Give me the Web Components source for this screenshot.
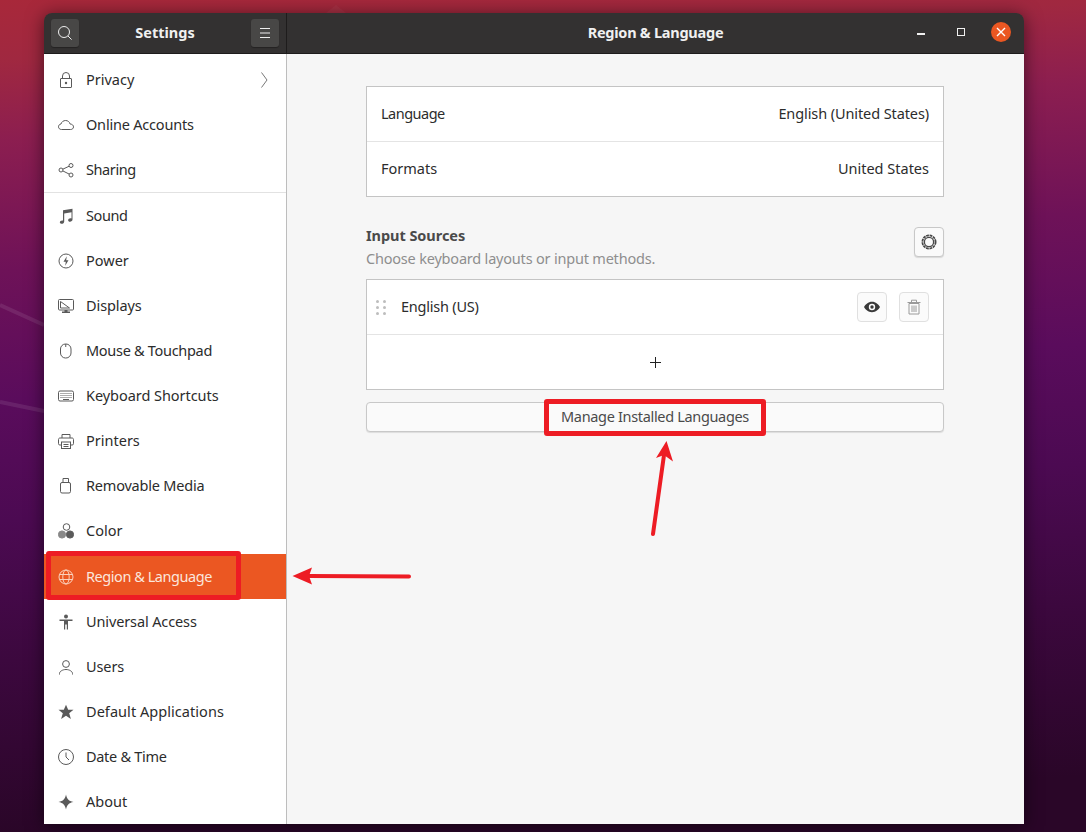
<!DOCTYPE html>
<html>
<head>
<meta charset="utf-8">
<title>Region & Language</title>
<style>
  body { margin: 0; font-family: "Noto Sans", "Liberation Sans", sans-serif; }
</style>
</head>
<body>
<desk-top>
  <settings-window>
    <span slot="left-title">Settings</span>
    <span slot="title" style="letter-spacing:-.25px">Region &amp; Language</span>

    <side-row slot="sidebar" icon="lock" chevron>Privacy</side-row>
    <side-row slot="sidebar" icon="cloud" style="letter-spacing:-.2px">Online Accounts</side-row>
    <side-row slot="sidebar" icon="share" style="letter-spacing:-.4px">Sharing</side-row>
    <side-sep slot="sidebar"></side-sep>
    <side-row slot="sidebar" icon="music" style="letter-spacing:-.4px">Sound</side-row>
    <side-row slot="sidebar" icon="power">Power</side-row>
    <side-row slot="sidebar" icon="display" style="letter-spacing:-.1px">Displays</side-row>
    <side-row slot="sidebar" icon="mouse" style="letter-spacing:-.3px">Mouse &amp; Touchpad</side-row>
    <side-row slot="sidebar" icon="keyboard" style="letter-spacing:-.05px">Keyboard Shortcuts</side-row>
    <side-row slot="sidebar" icon="printer">Printers</side-row>
    <side-row slot="sidebar" icon="usb" style="letter-spacing:-.2px">Removable Media</side-row>
    <side-row slot="sidebar" icon="color">Color</side-row>
    <side-row slot="sidebar" icon="globe" selected style="letter-spacing:-.45px">Region &amp; Language</side-row>
    <side-row slot="sidebar" icon="access" style="letter-spacing:-.12px">Universal Access</side-row>
    <side-row slot="sidebar" icon="user" style="letter-spacing:-.1px">Users</side-row>
    <side-row slot="sidebar" icon="star" style="letter-spacing:.05px">Default Applications</side-row>
    <side-row slot="sidebar" icon="clock" style="letter-spacing:-.3px">Date &amp; Time</side-row>
    <side-row slot="sidebar" icon="about">About</side-row>

    <region-panel></region-panel>
  </settings-window>

  <red-box style="left:46px;top:551px;width:195px;height:49px"></red-box>
  <red-box style="left:544px;top:399px;width:222px;height:37px"></red-box>
  <red-arrow tail="409,576.5" neck="309,576" head="292.5,576 312,567.5 309,576 312,584.5"></red-arrow>
  <red-arrow tail="653,534" neck="664,455" head="666.5,441 656,458 664,455 673,461.5"></red-arrow>
</desk-top>

<script>
const ICONS = {
  search: '<circle cx="7" cy="7" r="5.5"/><path d="M11 11l3.6 3.6"/>',
  menu: '<path d="M3 3.5h10M3 8h10M3 12.5h10"/>',
  lock: '<rect x="2.5" y="6.5" width="11" height="9" rx=".5"/><path d="M4.5 6.5V4a3.5 3.5 0 0 1 7 0v2.5"/><circle cx="8" cy="11" r="1.2" fill="currentColor" stroke="none"/>',
  cloud: '<path d="M3.5 12.5C1.6 12.5.5 11.2.5 9.8c0-1.5 1-2.6 2.5-2.8C3.5 4.900 5.500 3.500 7.600 3.500c2.300 0 4 1.500 4.500 3.500 2 .1 3.400 1.300 3.400 2.900 0 1.500-1.200 2.600-2.900 2.600z"/>',
  share: '<circle cx="3" cy="8" r="2"/><circle cx="13" cy="3.500" r="2"/><circle cx="13" cy="13" r="2"/><path d="M4.800 7.200l6.400-3M4.800 8.900l6.400 3.200"/>',
  music: '<path fill="currentColor" stroke="none" d="M5 2.200L14.500 .8v10.700c0 1.300-1.200 2.200-2.500 2.200-1.100 0-1.900-.6-1.900-1.500 0-1.100 1.100-1.900 2.400-1.900.4 0 .7 0 1 .2V4.300L6.200 5.400v8.300c0 1.200-1.200 2.100-2.500 2.100-1.100 0-1.900-.6-1.900-1.500 0-1.100 1.100-1.900 2.400-1.900.3 0 .6 0 .8.100z"/>',
  power: '<circle cx="8" cy="8" r="7"/><path fill="currentColor" stroke="none" d="M8.800 3.200L5.500 8.700h2.300l-.6 4.100 3.300-5.500H8.200z"/>',
  display: '<rect x=".5" y="1.500" width="15" height="10.500" rx="1"/><path d="M2.500 3.500l9 6.500h-9z"/><path fill="currentColor" stroke="none" d="M6.500 12h3v1.500h2.500V15H4v-1.500h2.500z"/>',
  mouse: '<rect x="2.500" y="1" width="10.500" height="14" rx="5"/><path d="M7.750 1v3"/>',
  keyboard: '<rect x=".5" y="3" width="15" height="10" rx="1.500"/><path stroke-dasharray="1 1" d="M2.500 5.500h11M2.500 7.500h11M2.500 9.500h11"/><path d="M5 11.500h6"/>',
  printer: '<path d="M4 5V1.500h8V5"/><path d="M3.500 12H1.800C1 12 .5 11.500 .5 10.700V6.500C.5 5.700 1 5 2 5h12c1 0 1.500.7 1.500 1.500v4.200c0 .8-.5 1.300-1.300 1.300h-1.700"/><rect x="3.500" y="9" width="9" height="6.500"/><path d="M5.500 11.500h5M5.500 13.500h5"/>',
  usb: '<rect x="2.500" y="4.500" width="10" height="10.500" rx="1.500"/><path d="M5 4.500V.5h5.500v4M7 2.500h.1M8.900 2.500h.1"/>',
  color: '<circle cx="8.500" cy="4" r="3.300"/><circle cx="4" cy="11.500" r="3.600" fill="#888" stroke="#888"/><circle cx="12" cy="11.500" r="3.600" fill="currentColor"/>',
  globe: '<circle cx="8" cy="8" r="7"/><ellipse cx="8" cy="8" rx="3.200" ry="7"/><path d="M1.300 5.500h13.400M1.300 10.500h13.400"/>',
  access: '<circle cx="8" cy="2.500" r="2" fill="currentColor" stroke="none"/><path fill="currentColor" stroke="none" d="M1.500 5.500h13v1.500H10v8.500H8.800v-5H7.200v5H6V7H1.500z"/>',
  user: '<circle cx="8" cy="5" r="3.400"/><path d="M1.500 15.500v-1c0-2 3-4 6.500-4s6.500 2 6.500 4v1"/>',
  star: '<path fill="currentColor" stroke="none" d="M8 .8l2.200 5h5.300l-4.300 3.500 1.700 5.600L8 11.700l-4.900 3.200 1.700-5.600L.5 5.800h5.300z"/>',
  clock: '<circle cx="8" cy="8" r="7.500"/><path d="M8 3.500V8l3 3"/>',
  about: '<path fill="currentColor" stroke="none" d="M8 .5c.8 4.300 2.700 6.700 7.500 7.500-4.800.8-6.700 3.200-7.500 7.500C7.200 11.200 5.300 8.800.5 8 5.300 7.200 7.200 4.800 8 .5z"/>',
  chevron: '<path d="M1.500 .5L7 8l-5.500 7.500"/>',
  gear: '<circle cx="8" cy="8" r="4.600" stroke-width="1.300"/><circle cx="8" cy="8" r="6.600" stroke-width="1.800" stroke-dasharray="2.800 .7"/>',
  eye: '<path fill="currentColor" fill-rule="evenodd" stroke="none" d="M8 2.800c3.800 0 6.500 2.600 8 5.200-1.500 2.600-4.200 5.200-8 5.200S1.500 10.600 0 8c1.500-2.600 4.200-5.200 8-5.200zM8 4.800a3.200 3.200 0 1 0 0 6.400 3.200 3.200 0 0 0 0-6.400z"/><circle cx="8" cy="8" r="1.700" fill="currentColor" stroke="none"/>',
  trash: '<path d="M3 4.500h10v10.500H3zM1.500 3.500h13M5.500 3V1.200h5V3M6 6.500v6.500M8 6.500v6.500M10 6.500v6.500"/>',
  plus: '<path d="M8.500 3v11M3 8.500h11"/>'
}

function svgIcon(name, size = 16) {
  return `<svg width="${size}" height="${size}" viewBox="0 0 16 16" fill="none" stroke="currentColor" stroke-width="1">${ICONS[name]}</svg>`
}

class DeskTop extends HTMLElement {
  constructor() {
    super()
    this.attachShadow({ mode: 'open' })
    this.shadowRoot.innerHTML = `
      <style>
        :host {
          display: block;
          position: relative;
          width: 1086px;
          height: 832px;
          box-sizing: border-box;
          padding: 13px 62px 8px 44px;
          overflow: hidden;
          background: linear-gradient(177deg, #a8283a 0, #a02840 60px, #8c1e50 140px, #6e1258 270px, #5a0c5c 400px, #4c0a52 520px, #3c083e 660px, #2a0628 832px);
        }
        svg { position: absolute; left: 0; top: 0; }
        ::slotted(settings-window) { position: relative; }
      </style>
      <svg width="1086" height="832">
        <path d="M0 305L44 325M0 402L44 411" stroke="#fff" stroke-opacity=".09" stroke-width="4" fill="none"/>
        <path d="M326 13L336 5L346 13z" fill="#fff" fill-opacity=".04"/>
      </svg>
      <slot></slot>
    `
  }
}

class SettingsWindow extends HTMLElement {
  constructor() {
    super()
    this.attachShadow({ mode: 'open' })
    this.shadowRoot.innerHTML = `
      <style>
        :host {
          display: grid;
          grid-template-columns: 243px 1fr;
          grid-template-rows: 41px 1fr;
          width: 980px;
          height: 811px;
          border-radius: 8px 8px 0 0;
          overflow: hidden;
          box-shadow: 0 2px 18px rgba(0, 0, 0, .55);
        }
        .bar {
          display: flex;
          align-items: center;
          background: #333131;
          border-bottom: 1px solid #1e1c1c;
          color: #f0f0f0;
          font-weight: 700;
          font-size: 14.5px;
          box-sizing: border-box;
        }
        ::slotted(span) { padding-bottom: 2px; }
        .left {
          border-right: 1px solid #1e1c1c;
          padding: 0 7px;
          justify-content: space-between;
        }
        .right { position: relative; justify-content: center; }
        .head-btn {
          width: 28px;
          height: 28px;
          margin-bottom: 1px;
          display: flex;
          align-items: center;
          justify-content: center;
          background: #484746;
          border-radius: 3px;
          color: #eee;
          box-shadow: 0 1px 1px rgba(0, 0, 0, .3);
        }
        .ctrls {
          position: absolute;
          right: 13px;
          top: 9px;
          display: flex;
          align-items: center;
          gap: 20px;
        }
        .ctrl {
          width: 20px;
          height: 20px;
          display: flex;
          align-items: center;
          justify-content: center;
        }
        .min { width: 8px; height: 1.5px; background: #f0f0f0; margin-top: 4px; }
        .max { width: 6px; height: 6px; border: 1px solid #f0f0f0; }
        .close { background: #eb5722; border-radius: 50%; }
        .sidebar {
          background: #fff;
          border-right: 1px solid #bdbdbd;
          padding-top: 3px;
          box-sizing: border-box;
          overflow: hidden;
        }
        .content { background: #f6f6f6; }
      </style>
      <div class="bar left">
        <div class="head-btn">${svgIcon('search')}</div>
        <slot name="left-title"></slot>
        <div class="head-btn">${svgIcon('menu')}</div>
      </div>
      <div class="bar right">
        <slot name="title"></slot>
        <div class="ctrls">
          <div class="ctrl"><div class="min"></div></div>
          <div class="ctrl"><div class="max"></div></div>
          <div class="ctrl close">
            <svg width="10" height="10" viewBox="0 0 10 10" stroke="#fff" stroke-width="1.4"><path d="M1 1l8 8M9 1l-8 8"/></svg>
          </div>
        </div>
      </div>
      <div class="sidebar"><slot name="sidebar"></slot></div>
      <div class="content"><slot></slot></div>
    `
  }
}

class SideRow extends HTMLElement {
  constructor() {
    super()
    this.attachShadow({ mode: 'open' })
  }

  connectedCallback() {
    this.shadowRoot.innerHTML = `
      <style>
        :host {
          display: flex;
          align-items: center;
          height: 45px;
          padding-left: 14px;
          gap: 12px;
          font-size: 14.5px;
          color: #2c2c2c;
        }
        :host([selected]) {
          margin-top: 1px;
          background: #eb5722;
          color: #fbe6dc;
        }
        slot { display: block; padding-bottom: 2px; }
        .icon { display: flex; color: #5a5a5a; width: 16px; }
        :host([selected]) .icon { color: #fbd0bc; }
        .chev { margin-left: auto; margin-right: 17px; display: flex; color: #777; }
      </style>
      <span class="icon">${svgIcon(this.getAttribute('icon'))}</span>
      <slot></slot>
      ${this.hasAttribute('chevron') ? `<span class="chev"><svg width="9" height="16" viewBox="0 0 9 16" fill="none" stroke="currentColor">${ICONS.chevron}</svg></span>` : ''}
    `
  }
}

class SideSep extends HTMLElement {
  constructor() {
    super()
    this.attachShadow({ mode: 'open' })
    this.shadowRoot.innerHTML = `<style>:host { display: block; height: 1px; background: #e2e2e2; }</style>`
  }
}

class InfoRow extends HTMLElement {
  constructor() {
    super()
    this.attachShadow({ mode: 'open' })
    this.shadowRoot.innerHTML = `
      <style>
        :host {
          display: flex;
          align-items: center;
          justify-content: space-between;
          height: 54px;
          padding: 0 14px;
          font-size: 14.5px;
          color: #2c2c2c;
          background: #fff;
        }
        :host(:not(:last-child)) { border-bottom: 1px solid #e4e4e4; }
        ::slotted(span) { padding-bottom: 2px; }
      </style>
      <slot></slot>
    `
  }
}

class ListFrame extends HTMLElement {
  constructor() {
    super()
    this.attachShadow({ mode: 'open' })
    this.shadowRoot.innerHTML = `
      <style>
        :host { display: block; border: 1px solid #c4c4c4; background: #fff; }
      </style>
      <slot></slot>
    `
  }
}

class IconButton extends HTMLElement {
  constructor() {
    super()
    this.attachShadow({ mode: 'open' })
  }

  connectedCallback() {
    this.shadowRoot.innerHTML = `
      <style>
        :host {
          display: flex;
          align-items: center;
          justify-content: center;
          box-sizing: border-box;
          width: 30px;
          height: 30px;
          border: 1px solid #e0e0e0;
          border-radius: 4px;
          background: #fbfbfb;
          color: #3a3a3a;
        }
        :host([raised]) {
          border-color: #c8c8c8;
          box-shadow: 0 1px 1px rgba(0, 0, 0, .12);
          background: #fafafa;
          color: #484848;
        }
        :host([disabled]) { color: #9a9a9a; }
      </style>
      ${svgIcon(this.getAttribute('icon'))}
    `
  }
}

class RegionPanel extends HTMLElement {
  constructor() {
    super()
    this.attachShadow({ mode: 'open' })
    this.shadowRoot.innerHTML = `
      <style>
        :host {
          display: block;
          padding: 32px 80px 0 79px;
          font-size: 14.5px;
          color: #2c2c2c;
        }
        .head {
          display: flex;
          justify-content: space-between;
          align-items: flex-start;
          margin: 28px 0 11px;
        }
        h3 {
          margin: 0;
          font-size: 14.5px;
          line-height: 20px;
          font-weight: 700;
          color: #4a4a4a;
          letter-spacing: -.05px;
        }
        p {
          margin: 3px 0 0;
          line-height: 20px;
          color: #8e8e8e;
          letter-spacing: -.2px;
        }
        icon-button { margin-top: 2px; }
        .source { justify-content: flex-start; gap: 0; padding: 0 14px 0 9px; }
        .dots {
          display: grid;
          grid-template-columns: 3px 3px;
          grid-auto-rows: 3px;
          gap: 3px 4px;
          margin-right: 15px;
        }
        .dots i { background: #bdbdbd; border-radius: 50%; }
        .actions { display: flex; gap: 12px; margin-left: auto; }
        .actions icon-button { margin-top: 0; }
        .add { justify-content: center; color: #222; }
        .add svg { display: block; }
        .manage {
          display: flex;
          align-items: center;
          justify-content: center;
          box-sizing: border-box;
          height: 30px;
          margin-top: 12px;
          padding-bottom: 2px;
          border: 1px solid #c8c8c8;
          border-radius: 4px;
          background: #fafafa;
          box-shadow: 0 1px 1px rgba(0, 0, 0, .1);
          color: #4a4a4a;
          letter-spacing: -.33px;
        }
      </style>
      <list-frame>
        <info-row><span style="letter-spacing:-.5px">Language</span><span style="letter-spacing:-.1px">English (United States)</span></info-row>
        <info-row><span>Formats</span><span>United States</span></info-row>
      </list-frame>
      <div class="head">
        <div>
          <h3>Input Sources</h3>
          <p>Choose keyboard layouts or input methods.</p>
        </div>
        <icon-button icon="gear" raised></icon-button>
      </div>
      <list-frame>
        <info-row class="source">
          <div class="dots"><i></i><i></i><i></i><i></i><i></i><i></i></div>
          <span style="letter-spacing:-.22px">English (US)</span>
          <div class="actions">
            <icon-button icon="eye"></icon-button>
            <icon-button icon="trash" disabled></icon-button>
          </div>
        </info-row>
        <info-row class="add">${svgIcon('plus')}</info-row>
      </list-frame>
      <div class="manage">Manage Installed Languages</div>
    `
  }
}

class RedBox extends HTMLElement {
  constructor() {
    super()
    this.attachShadow({ mode: 'open' })
    this.shadowRoot.innerHTML = `
      <style>
        :host {
          position: absolute;
          box-sizing: border-box;
          border: 5px solid #ed1c24;
          border-radius: 3px;
        }
      </style>
    `
  }
}

class RedArrow extends HTMLElement {
  constructor() {
    super()
    this.attachShadow({ mode: 'open' })
  }

  connectedCallback() {
    const [tx, ty] = this.getAttribute('tail').split(',')
    const [nx, ny] = this.getAttribute('neck').split(',')
    this.shadowRoot.innerHTML = `
      <style>
        :host { position: absolute; left: 0; top: 0; pointer-events: none; }
        svg { display: block; }
      </style>
      <svg width="1086" height="832">
        <line x1="${tx}" y1="${ty}" x2="${nx}" y2="${ny}" stroke="#ed1c24" stroke-width="4" stroke-linecap="round"/>
        <polygon points="${this.getAttribute('head')}" fill="#ed1c24"/>
      </svg>
    `
  }
}

customElements.define('desk-top', DeskTop)
customElements.define('settings-window', SettingsWindow)
customElements.define('side-row', SideRow)
customElements.define('side-sep', SideSep)
customElements.define('info-row', InfoRow)
customElements.define('list-frame', ListFrame)
customElements.define('icon-button', IconButton)
customElements.define('region-panel', RegionPanel)
customElements.define('red-box', RedBox)
customElements.define('red-arrow', RedArrow)
</script>
</body>
</html>
